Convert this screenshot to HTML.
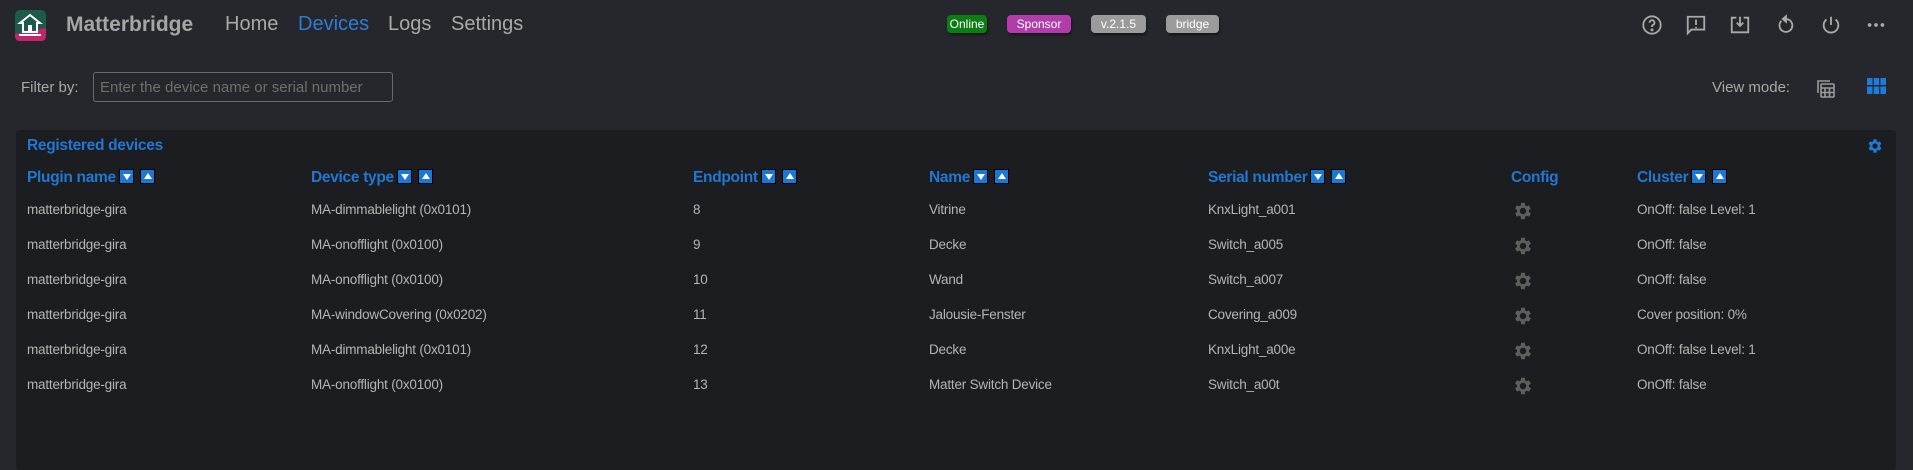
<!DOCTYPE html>
<html><head><meta charset="utf-8"><style>
*{margin:0;padding:0;box-sizing:border-box}
body{width:1913px;height:460px;background:#25272c;font-family:"Liberation Sans",sans-serif;position:relative;overflow:hidden;color:#bdbdbd}
.a{position:absolute;white-space:nowrap}
.nav{font-size:20px;color:#a9a9a9;top:13px}
.badge{position:absolute;top:15px;height:18px;border-radius:4px;font-size:12px;color:#fff;text-align:center;line-height:18px;box-shadow:1px 2px 2px rgba(0,0,0,.4)}
.ic{position:absolute;top:14px;width:22px;height:22px}
.card{position:absolute;left:16px;top:130px;width:1880px;height:340px;background:#1c1d21;border-radius:4px}
.th{position:absolute;top:169px;font-size:15.5px;font-weight:bold;color:#2177d1;letter-spacing:-0.3px;white-space:nowrap}
.s{display:inline-block;width:15px;height:15px;background:#1a78d6;border:1px solid #000;vertical-align:-2px;margin-left:3px;position:relative}
.s.d::after{content:"";position:absolute;left:3px;top:4px;border-left:4px solid transparent;border-right:4px solid transparent;border-top:6px solid #fff}
.s.u::after{content:"";position:absolute;left:3px;top:3px;border-left:4px solid transparent;border-right:4px solid transparent;border-bottom:6px solid #fff}
.s.u{margin-left:6px}
.td{position:absolute;font-size:13.5px;color:#b5b5b5;white-space:nowrap;letter-spacing:-0.2px}
</style></head><body>
<svg class="a" style="left:15px;top:10px" width="31" height="31" viewBox="0 0 31 31"><rect width="31" height="31" rx="5" fill="#1d5a4a"/><path d="M0 24 L31 18 L31 26 Q31 31 26 31 L5 31 Q0 31 0 26Z" fill="#c2246e"/><path d="M15 5 L5 13 L8 13 L8 22 L22 22 L22 13 L25 13Z" fill="none" stroke="#fff" stroke-width="2"/><path d="M4 25 H26" stroke="#fff" stroke-width="2"/><rect x="13" y="15" width="4" height="7" fill="#fff"/></svg>
<div class="a" style="left:66px;top:13px;font-size:21px;font-weight:bold;color:#a6a6a6">Matterbridge</div>
<div class="a nav" style="left:225px">Home</div>
<div class="a nav" style="left:298px;color:#2e7bd6">Devices</div>
<div class="a nav" style="left:388px">Logs</div>
<div class="a nav" style="left:451px">Settings</div>
<div class="badge" style="left:947px;width:40px;background:#0b7d14">Online</div>
<div class="badge" style="left:1007px;width:64px;background:#b23ca9">Sponsor</div>
<div class="badge" style="left:1091px;width:55px;background:#9b9b9b">v.2.1.5</div>
<div class="badge" style="left:1166px;width:53px;background:#9b9b9b">bridge</div>
<svg class="ic" style="left:1641px" viewBox="0 0 24 24" fill="none" stroke="#a9a9a9" stroke-width="2"><circle cx="12" cy="12" r="9.5"/><path d="M9.3 9.5a2.7 2.7 0 1 1 3.7 2.5c-.7.3-1 .9-1 1.6v.6" /><circle cx="12" cy="17.3" r=".6" fill="#a9a9a9"/></svg>
<svg class="ic" style="left:1685px" viewBox="0 0 24 24" fill="none" stroke="#a9a9a9" stroke-width="2"><path d="M3 3h18v14H7l-4 4z"/><path d="M12 6v6M12 14v1.5"/></svg>
<svg class="ic" style="left:1729px" viewBox="0 0 24 24" fill="none" stroke="#a9a9a9" stroke-width="2"><path d="M8 4H3v16h18V4h-5"/><path d="M12 3v10M8.5 9.5 12 13l3.5-3.5"/></svg>
<svg class="ic" style="left:1775px" viewBox="0 0 24 24" fill="none" stroke="#a9a9a9" stroke-width="2"><path d="M7 7.5A7 7 0 1 0 12 5.5"/><path d="M12 2.5v6l-3.5-3z" fill="#a9a9a9"/></svg>
<svg class="ic" style="left:1820px" viewBox="0 0 24 24" fill="none" stroke="#a9a9a9" stroke-width="2"><path d="M12 3v9"/><path d="M7 6a8 8 0 1 0 10 0"/></svg>
<svg class="ic" style="left:1865px" viewBox="0 0 24 24" fill="#a9a9a9"><circle cx="5" cy="12" r="2"/><circle cx="12" cy="12" r="2"/><circle cx="19" cy="12" r="2"/></svg>
<div class="a" style="left:21px;top:79px;font-size:15px;color:#a9a9a9">Filter by:</div>
<div class="a" style="left:93px;top:72px;width:300px;height:30px;border:1px solid #6a6a6a;border-radius:3px;font-size:15px;color:#6f6f6f;padding:6px 0 0 6px">Enter the device name or serial number</div>
<div class="a" style="left:1712px;top:79px;font-size:15px;color:#a9a9a9">View mode:</div>
<svg class="a" style="left:1816px;top:78px" width="20" height="20" viewBox="0 0 20 20" fill="none" stroke="#9a9a9a" stroke-width="1.6"><path d="M2 15V3h12"/><rect x="5" y="6" width="13" height="13" rx="1"/><path d="M5 10h13M9 10v9M13.5 10v9M5 14.5h13"/></svg>
<svg class="a" style="left:1867px;top:78px" width="19" height="16" viewBox="0 0 19 16" fill="#1f7ad9"><rect x="0" y="0" width="5.5" height="7"/><rect x="6.7" y="0" width="5.5" height="7"/><rect x="13.4" y="0" width="5.6" height="7"/><rect x="0" y="8.5" width="5.5" height="7.5"/><rect x="6.7" y="8.5" width="5.5" height="7.5"/><rect x="13.4" y="8.5" width="5.6" height="7.5"/></svg>
<div class="card"></div>
<div class="a" style="left:27px;top:137px;font-size:15.5px;font-weight:bold;color:#2177d1;letter-spacing:-0.3px">Registered devices</div>
<svg class="a" style="left:1866px;top:137px" width="18" height="18" viewBox="0 0 24 24"><path fill="#1f7ad9" d="M19.4 13a7.5 7.5 0 0 0 0-2l2.1-1.6-2-3.5-2.5 1a7.6 7.6 0 0 0-1.7-1L15 3h-4l-.4 2.8a7.6 7.6 0 0 0-1.7 1l-2.5-1-2 3.5L6.5 11a7.5 7.5 0 0 0 0 2l-2.1 1.6 2 3.5 2.5-1a7.6 7.6 0 0 0 1.7 1L11 21h4l.4-2.8a7.6 7.6 0 0 0 1.7-1l2.5 1 2-3.5zM13 15.5a3.5 3.5 0 1 1 0-7 3.5 3.5 0 0 1 0 7z" transform="translate(-1 0)"/></svg>
<div class="th" style="left:27px">Plugin name<span class="s d"></span><span class="s u"></span></div>
<div class="th" style="left:311px">Device type<span class="s d"></span><span class="s u"></span></div>
<div class="th" style="left:693px">Endpoint<span class="s d"></span><span class="s u"></span></div>
<div class="th" style="left:929px">Name<span class="s d"></span><span class="s u"></span></div>
<div class="th" style="left:1208px">Serial number<span class="s d"></span><span class="s u"></span></div>
<div class="th" style="left:1511px">Config</div>
<div class="th" style="left:1637px">Cluster<span class="s d"></span><span class="s u"></span></div>
<div id="rows"></div>
<script>
var d=[["MA-dimmablelight (0x0101)","8","Vitrine","KnxLight_a001","OnOff: false Level: 1"],
["MA-onofflight (0x0100)","9","Decke","Switch_a005","OnOff: false"],
["MA-onofflight (0x0100)","10","Wand","Switch_a007","OnOff: false"],
["MA-windowCovering (0x0202)","11","Jalousie-Fenster","Covering_a009","Cover position: 0%"],
["MA-dimmablelight (0x0101)","12","Decke","KnxLight_a00e","OnOff: false Level: 1"],
["MA-onofflight (0x0100)","13","Matter Switch Device","Switch_a00t","OnOff: false"]];
var g='<path fill="#5e5e5e" d="M19.4 13a7.5 7.5 0 0 0 0-2l2.1-1.6-2-3.5-2.5 1a7.6 7.6 0 0 0-1.7-1L15 3h-4l-.4 2.8a7.6 7.6 0 0 0-1.7 1l-2.5-1-2 3.5L6.5 11a7.5 7.5 0 0 0 0 2l-2.1 1.6 2 3.5 2.5-1a7.6 7.6 0 0 0 1.7 1L11 21h4l.4-2.8a7.6 7.6 0 0 0 1.7-1l2.5 1 2-3.5zM13 15.5a3.5 3.5 0 1 1 0-7 3.5 3.5 0 0 1 0 7z" transform="translate(-1 0)"/>';
var h='';d.forEach(function(r,i){var y=202+i*35;
h+='<div class="td" style="left:27px;top:'+y+'px">matterbridge-gira</div>';
h+='<div class="td" style="left:311px;top:'+y+'px">'+r[0]+'</div>';
h+='<div class="td" style="left:693px;top:'+y+'px">'+r[1]+'</div>';
h+='<div class="td" style="left:929px;top:'+y+'px">'+r[2]+'</div>';
h+='<div class="td" style="left:1208px;top:'+y+'px">'+r[3]+'</div>';
h+='<svg class="a" style="left:1512px;top:'+(y-2)+'px" width="22" height="22" viewBox="0 0 24 24">'+g+'</svg>';
h+='<div class="td" style="left:1637px;top:'+y+'px">'+r[4]+'</div>';});
document.getElementById('rows').innerHTML=h;
</script>
</body></html>
